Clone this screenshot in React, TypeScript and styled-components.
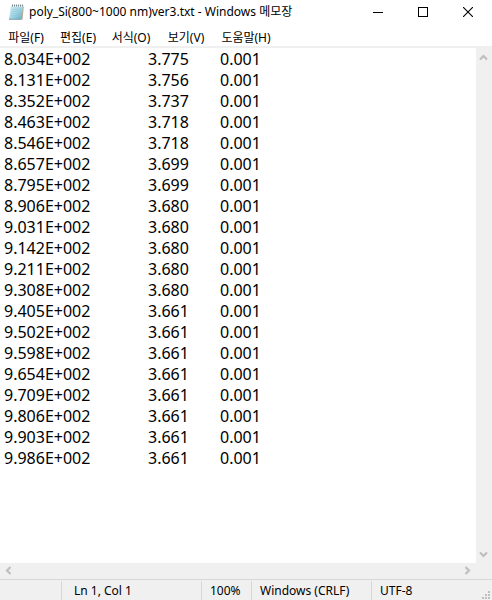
import React from "react";
import styled, { createGlobalStyle } from "styled-components";

const GlobalStyle = createGlobalStyle`
  * { box-sizing: border-box; }
  body {
    margin: 0;
    background: #fff;
    color: #000;
    font-family: "Noto Sans", "Noto Sans CJK KR", sans-serif;
    font-size: 12px;
  }
  button, textarea { font: inherit; color: inherit; }
`;

const Window = styled.div`
  display: flex;
  flex-direction: column;
  min-height: 100vh;
  overflow: hidden;
`;

const TitleBar = styled.header`
  display: flex;
  align-items: center;
  height: 24px;
  padding: 0 2px 0 8px;
`;

const Title = styled.h1`
  flex: 1;
  margin: 0 0 0 4px;
  font-size: 12px;
  font-weight: 400;
  line-height: 24px;
  white-space: nowrap;
`;

const PlainButton = styled.button`
  display: flex;
  align-items: center;
  justify-content: center;
  padding: 0;
  border: 0;
  background: transparent;
`;

const CaptionButton = styled(PlainButton)`
  width: 45px;
  height: 24px;
`;

const MenuBar = styled.nav`
  display: flex;
  height: 24px;
  border-bottom: 2px solid #f0f0f0;
`;

const MenuItem = styled(PlainButton)<{ $width: number }>`
  width: ${(p) => p.$width}px;
  height: 26px;
  font-size: 12px;
  white-space: nowrap;
`;

const Editor = styled.main`
  flex: 1;
  display: grid;
  grid-template-columns: 1fr 16px;
  grid-template-rows: 1fr 16px;
  background: #f0f0f0;
`;

const TextArea = styled.textarea`
  width: 100%;
  min-height: 430px;
  padding: 1px 4px;
  border: 0;
  outline: 0;
  resize: none;
  overflow: hidden;
  background: #fff;
  font-size: 16px;
  line-height: 21px;
  white-space: pre;
  tab-size: 72px;
`;

const ScrollBar = styled.div<{ $vertical?: boolean }>`
  display: flex;
  flex-direction: ${(p) => (p.$vertical ? "column" : "row")};
  justify-content: space-between;
  background: #f0f0f0;
`;

const ScrollButton = styled(PlainButton)`
  width: 15px;
  height: 18px;
`;

const ScrollSideButton = styled(PlainButton)`
  width: 17px;
  height: 15px;
`;

const StatusBar = styled.footer`
  position: relative;
  display: grid;
  grid-template-columns: 1fr 140px 50px 120px 121px;
  height: 21px;
  padding-top: 1px;
  border-top: 1px solid #d7d7d7;
  background: #f0f0f0;
`;

const StatusCell = styled.div<{ $pad?: number }>`
  padding-left: ${(p) => p.$pad ?? 8}px;
  border-left: 1px solid #d7d7d7;
  line-height: 20px;
  white-space: nowrap;

  &:first-child { border-left: 0; }
`;

const Grip = styled.svg`
  position: absolute;
  right: 2px;
  bottom: 1px;
`;

const menus = [
  { label: "파일", key: "F", width: 52 },
  { label: "편집", key: "E", width: 52 },
  { label: "서식", key: "O", width: 54 },
  { label: "보기", key: "V", width: 56 },
  { label: "도움말", key: "H", width: 64 },
];

const rows: [string, string][] = [
  ["8.034", "3.775"],
  ["8.131", "3.756"],
  ["8.352", "3.737"],
  ["8.463", "3.718"],
  ["8.546", "3.718"],
  ["8.657", "3.699"],
  ["8.795", "3.699"],
  ["8.906", "3.680"],
  ["9.031", "3.680"],
  ["9.142", "3.680"],
  ["9.211", "3.680"],
  ["9.308", "3.680"],
  ["9.405", "3.661"],
  ["9.502", "3.661"],
  ["9.598", "3.661"],
  ["9.654", "3.661"],
  ["9.709", "3.661"],
  ["9.806", "3.661"],
  ["9.903", "3.661"],
  ["9.986", "3.661"],
];

const content = rows.map(([wave, n]) => `${wave}E+002\t${n}\t0.001`).join("\n");

const NotepadIcon = () => (
  <svg width="17" height="18" viewBox="0 0 17 18" aria-hidden="true">
    <defs>
      <linearGradient id="paper" x1="0" y1="0" x2="1" y2="1">
        <stop offset="0" stopColor="#d3eef5" />
        <stop offset="0.5" stopColor="#a3d6e5" />
        <stop offset="1" stopColor="#5fabc4" />
      </linearGradient>
    </defs>
    <path d="M14.5 3 L15.8 3.5 L14.6 16.5 L13 16.5 Z" fill="#c2ad8c" />
    <path d="M3 2.5 H15 L13.5 16.5 H1 Z" fill="url(#paper)" />
    <path d="M1 15.7 H13.5 L13.4 16.7 H1 Z" fill="#84a3ae" />
    <path d="M4 6.5 H13 M3.7 8.5 H12.8 M3.5 10.5 H12.6 M3.2 12.5 H12.4" stroke="#8cc6d6" strokeWidth="0.5" />
    <path d="M3 2.5 H15 V4 H2.9 Z" fill="#e6eef0" />
    <path d="M4.5 1.5 V3.5 M6.5 1.5 V3.5 M8.5 1.5 V3.5 M10.5 1.5 V3.5 M12.5 1.5 V3.5 M14.5 1.5 V3.5" stroke="#6d7c80" strokeWidth="0.9" />
  </svg>
);

const chevrons = {
  up: "M1 6.5 L4.5 3 L8 6.5",
  down: "M1 2.5 L4.5 6 L8 2.5",
  left: "M6.5 1 L3 4.5 L6.5 8",
  right: "M2.5 1 L6 4.5 L2.5 8",
};

const Chevron = ({ to }: { to: keyof typeof chevrons }) => (
  <svg width="9" height="9" viewBox="0 0 9 9" aria-hidden="true">
    <path d={chevrons[to]} fill="none" stroke="#bfbfbf" strokeWidth="2.2" />
  </svg>
);

export default function App() {
  return (
    <>
      <GlobalStyle />
      <Window>
        <TitleBar>
          <NotepadIcon />
          <Title>poly_Si(800~1000 nm)ver3.txt - Windows 메모장</Title>
          <CaptionButton aria-label="최소화">
            <svg width="10" height="10" shapeRendering="crispEdges">
              <path d="M0 5.5 H10" stroke="#000" />
            </svg>
          </CaptionButton>
          <CaptionButton aria-label="최대화">
            <svg width="10" height="10" shapeRendering="crispEdges">
              <rect x="0.5" y="0.5" width="9" height="9" fill="none" stroke="#000" />
            </svg>
          </CaptionButton>
          <CaptionButton aria-label="닫기">
            <svg width="10" height="10">
              <path d="M0 0 L10 10 M10 0 L0 10" stroke="#000" strokeWidth="1.1" />
            </svg>
          </CaptionButton>
        </TitleBar>
        <MenuBar>
          {menus.map((m) => (
            <MenuItem key={m.key} $width={m.width}>
              {m.label}({m.key})
            </MenuItem>
          ))}
        </MenuBar>
        <Editor>
          <TextArea aria-label="텍스트 편집기" wrap="off" spellCheck={false} defaultValue={content} />
          <ScrollBar $vertical>
            <ScrollButton aria-label="위로"><Chevron to="up" /></ScrollButton>
            <ScrollButton aria-label="아래로"><Chevron to="down" /></ScrollButton>
          </ScrollBar>
          <ScrollBar>
            <ScrollSideButton aria-label="왼쪽으로"><Chevron to="left" /></ScrollSideButton>
            <ScrollSideButton aria-label="오른쪽으로"><Chevron to="right" /></ScrollSideButton>
          </ScrollBar>
        </Editor>
        <StatusBar>
          <StatusCell />
          <StatusCell $pad={12}>Ln 1, Col 1</StatusCell>
          <StatusCell>100%</StatusCell>
          <StatusCell>Windows (CRLF)</StatusCell>
          <StatusCell>UTF-8</StatusCell>
          <Grip width="8" height="8" fill="#bfbfbf" shapeRendering="crispEdges" aria-hidden="true">
            <path d="M6 0h2v2h-2z M3 3h2v2h-2z M6 3h2v2h-2z M0 6h2v2h-2z M3 6h2v2h-2z M6 6h2v2h-2z" />
          </Grip>
        </StatusBar>
      </Window>
    </>
  );
}
